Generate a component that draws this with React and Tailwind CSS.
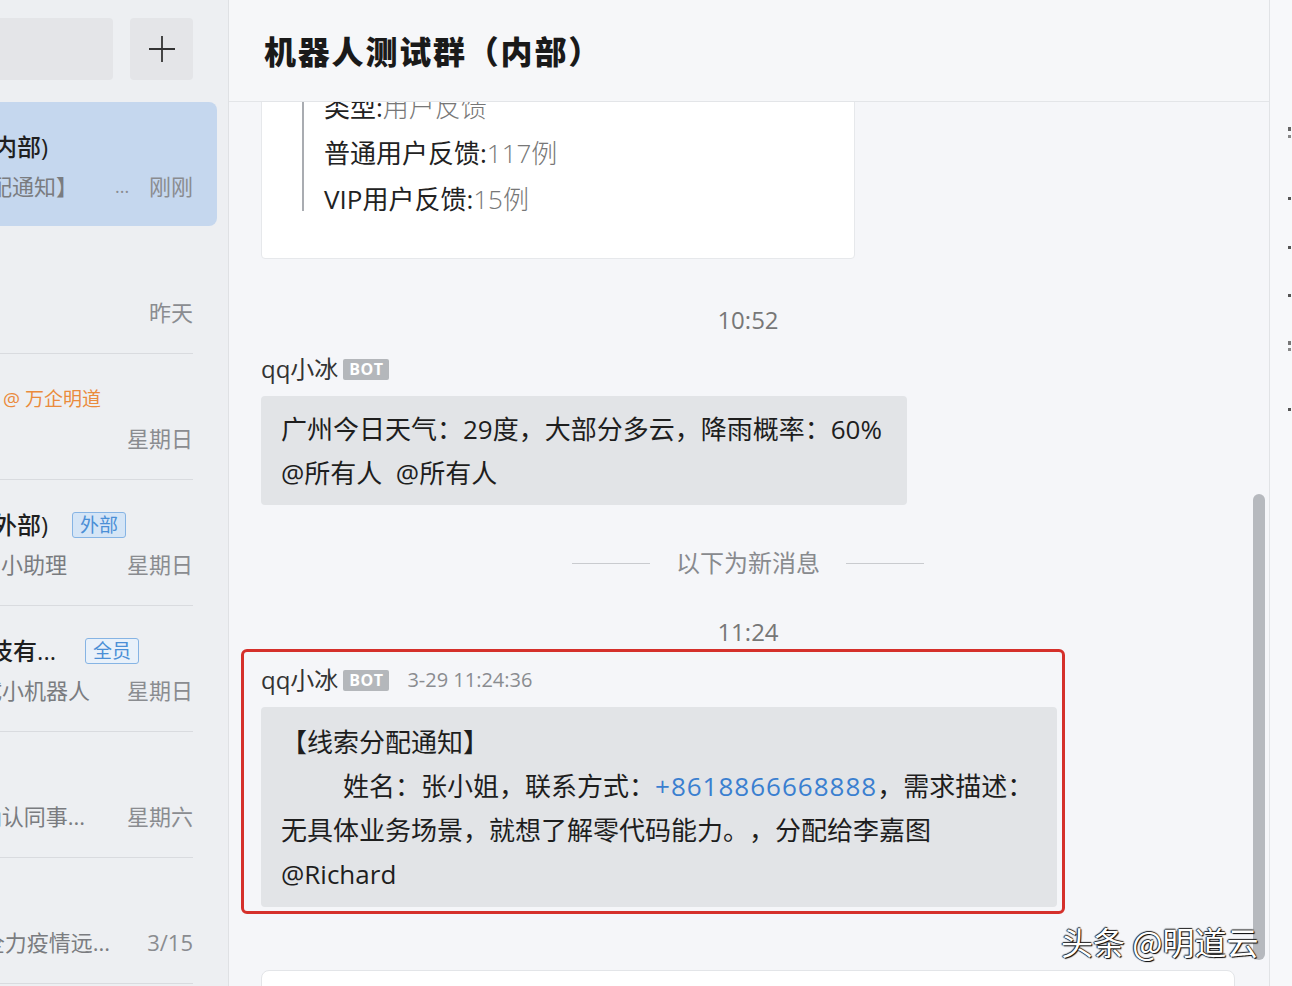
import React from "react";

const FONT = { fontFamily: '"Open Sans", "Noto Sans CJK SC", sans-serif' };

function Row({ active, titleW, title, tag, tagCls, orange, subW, sub, dots, time }) {
  return (
    <div
      className={
        active
          ? "h-[124px] mb-[2px] w-[217px] rounded-r-[8px] bg-[#c5d7ee]"
          : "h-[126px] w-[217px]"
      }
    >
      <div className={"h-full mr-[24px] pt-[29px] " + (active ? "" : "border-b border-[#d9dbdf]")}>
        <div className="h-[32px] flex items-center">
          {title ? (
            <div className="flex justify-end whitespace-nowrap text-[24px] leading-[32px] text-[#1f1f1f] font-medium" style={{ width: titleW }}>
              <span className="whitespace-nowrap">{title}</span>
            </div>
          ) : null}
          {orange ? (
            <div className="ml-[3px] whitespace-nowrap text-[19px] leading-[32px] text-[#ea8b3c]">{orange}</div>
          ) : null}
          {tag ? (
            <div className={"h-[26px] px-[7px] flex items-center rounded-[3px] border text-[19px] leading-none " + tagCls}>
              {tag}
            </div>
          ) : null}
        </div>
        <div className="mt-[7px] h-[32px] flex items-center">
          {sub ? (
            <div className="flex justify-end whitespace-nowrap text-[22px] leading-[32px] text-[#7a7c80]" style={{ width: subW }}>
              <span className="whitespace-nowrap">{sub}</span>
            </div>
          ) : null}
          {dots ? <div className="ml-[37px] text-[18px] text-[#8a8c90] leading-[32px]">...</div> : null}
          <div className="ml-auto text-[22px] leading-[32px] text-[#8a8c90] whitespace-nowrap">{time}</div>
        </div>
      </div>
    </div>
  );
}

function Bot() {
  return (
    <span className="ml-[5px] inline-flex h-[21px] w-[46px] items-center justify-center rounded-[2px] bg-[#b4b7bb] text-[16px] font-bold leading-none text-white tracking-[0.5px]">
      BOT
    </span>
  );
}

export default function App() {
  return (
    <div className="relative w-[1292px] h-[986px] overflow-hidden flex bg-[#f5f6f9] [text-spacing-trim:space-all]" style={FONT}>
      {/* Sidebar */}
      <div className="w-[229px] shrink-0 h-full bg-[#edeff2] border-r border-[#dfe1e4] flex flex-col overflow-hidden">
        <div className="h-[102px] shrink-0 flex items-center pb-[4px]">
          <div className="w-[113px] h-[62px] rounded-r-[4px] bg-[#e4e5e8]" />
          <div className="ml-[17px] w-[63px] h-[62px] rounded-[4px] bg-[#e4e5e8] flex items-center justify-center">
            <svg width="30" height="30" viewBox="0 0 30 30">
              <path d="M15 2v26M2 15h26" stroke="#333" strokeWidth="1.8" fill="none" />
            </svg>
          </div>
        </div>
        <Row
          active
          titleW="48px"
          title="机器人测试群(内部)"
          subW="78px"
          sub="qq小冰:【线索分配通知】"
          dots
          time="刚刚"
        />
        <Row time="昨天" />
        <Row orange="@ 万企明道" time="星期日" />
        <Row
          titleW="48px"
          title="明道云测试群(外部)"
          tag="外部"
          tagCls="ml-[24px] bg-[#d5e5f6] border-[#86b4e4] text-[#4b8fd6]"
          subW="67px"
          sub="消息来自小助理"
          time="星期日"
        />
        <Row
          titleW="56px"
          title="全员群：技有..."
          tag="全员"
          tagCls="ml-[29px] bg-[#e9f1fa] border-[#86b4e4] text-[#4b8fd6]"
          subW="90px"
          sub="测试小机器人"
          time="星期日"
        />
        <Row subW="85px" sub="请确认同事..." time="星期六" />
        <Row subW="110px" sub="全力疫情远..." time="3/15" />
      </div>

      {/* Main */}
      <div className="w-[1040px] shrink-0 h-full flex flex-col">
        <div className="h-[102px] shrink-0 bg-[#f6f7f9] border-b border-[#e3e5e8] flex items-center pl-[35px] pb-[2px]">
          <div className="text-[32px] font-black text-[#1a1a1a] tracking-[1.8px]" style={{ fontFamily: '"Noto Sans CJK SC", sans-serif' }}>
            机器人测试群（内部）
          </div>
        </div>
        <div className="flex-1 flex overflow-hidden">
          <div className="flex-1 pl-[32px] pr-[12px] flex flex-col">
            {/* Card */}
            <div className="mt-[-53px] w-[594px] bg-white border border-[#e6e8eb] rounded-[4px] pt-[45px] pb-[47px] pl-[40px]">
              <div className="border-l-2 border-[#a9acb1] pl-[20px] flex flex-col gap-[22px] text-[26px] leading-[24px]">
                <div className="whitespace-nowrap"><span className="text-[#222]">类型:</span><span className="text-[#777] font-light">用户反馈</span></div>
                <div className="whitespace-nowrap"><span className="text-[#222]">普通用户反馈:</span><span className="text-[#777] font-light">117例</span></div>
                <div className="whitespace-nowrap"><span className="text-[#222]">VIP用户反馈:</span><span className="text-[#777] font-light">15例</span></div>
              </div>
            </div>

            <div className="mt-[46px] h-[30px] leading-[30px] text-center text-[24px] text-[#777]">10:52</div>

            <div className="mt-[20px] h-[28px] flex items-center text-[24px] text-[#333]">
              <span>qq小冰</span>
              <Bot />
            </div>

            <div className="mt-[13px] w-[646px] bg-[#e2e4e7] rounded-[4px] pt-[11px] pb-[10px] px-[20px] text-[26px] leading-[44px] text-[#1e1e1e]">
              <div className="whitespace-nowrap">广州今日天气：29度，大部分多云，降雨概率：60%</div>
              <div className="whitespace-nowrap">@所有人&nbsp;&nbsp;@所有人</div>
            </div>

            <div className="mt-[44px] h-[28px] flex items-center justify-center">
              <div className="w-[78px] h-px bg-[#c9cbcf]" />
              <div className="mx-[26px] text-[24px] leading-[28px] text-[#888a8e]">以下为新消息</div>
              <div className="w-[78px] h-px bg-[#c9cbcf]" />
            </div>

            <div className="mt-[40px] h-[30px] leading-[30px] text-center text-[24px] text-[#777]">11:24</div>

            <div className="mt-[2px] ml-[-20px] w-[824px] border-[3px] border-[#d5302b] rounded-[6px] pl-[17px] pt-[14px] pb-[4px]">
              <div className="h-[28px] flex items-center text-[24px] text-[#333]">
                <span>qq小冰</span>
                <Bot />
                <span className="ml-[18px] text-[20px] text-[#8a8c90]">3-29 11:24:36</span>
              </div>
              <div className="mt-[13px] w-[796px] bg-[#e2e4e7] rounded-[4px] pt-[13px] pb-[11px] px-[20px] text-[26px] leading-[44px] text-[#1e1e1e]">
                <div className="whitespace-nowrap">【线索分配通知】</div>
                <div className="whitespace-nowrap pl-[62px]">
                  姓名：张小姐，联系方式：<span className="text-[#3a7fd0] tracking-[1px]">+8618866668888</span>，需求描述：
                </div>
                <div className="whitespace-nowrap">无具体业务场景，就想了解零代码能力。，分配给李嘉图</div>
                <div className="whitespace-nowrap">@Richard</div>
              </div>
            </div>

            <div className="mt-[56px] w-[974px] h-[40px] shrink-0 bg-white border border-[#e3e5e8] rounded-t-[8px]" />
          </div>
          <div className="w-[24px] shrink-0">
            <div className="ml-[6px] mt-[392px] w-[12px] h-[466px] rounded-full bg-[#b6b9be]" />
          </div>
        </div>
      </div>

      {/* Right strip */}
      <div className="flex-1 h-full bg-[#f7f8fa] border-l border-[#e1e3e6] flex flex-col items-end pr-[1px]">
        <div className="mt-[127px] w-[3px] h-[4px] bg-[#666]" />
        <div className="mt-[4px] w-[3px] h-[3px] bg-[#888]" />
        <div className="mt-[59px] w-[3px] h-[3px] bg-[#555]" />
        <div className="mt-[46px] w-[3px] h-[3px] bg-[#555]" />
        <div className="mt-[45px] w-[3px] h-[3px] bg-[#555]" />
        <div className="mt-[44px] w-[3px] h-[4px] bg-[#777]" />
        <div className="mt-[3px] w-[3px] h-[3px] bg-[#888]" />
        <div className="mt-[57px] w-[3px] h-[3px] bg-[#555]" />
      </div>

      {/* Watermark */}
      <div
        className="absolute left-[1061px] top-[920px] text-[32px] leading-[42px] text-white whitespace-nowrap [text-shadow:1px_1px_1px_#000,-1px_0_1px_#222,0_-1px_1px_#222]"
        style={{ fontFamily: '"Noto Sans CJK SC", sans-serif' }}
      >
        头条 @明道云
      </div>
    </div>
  );
}
